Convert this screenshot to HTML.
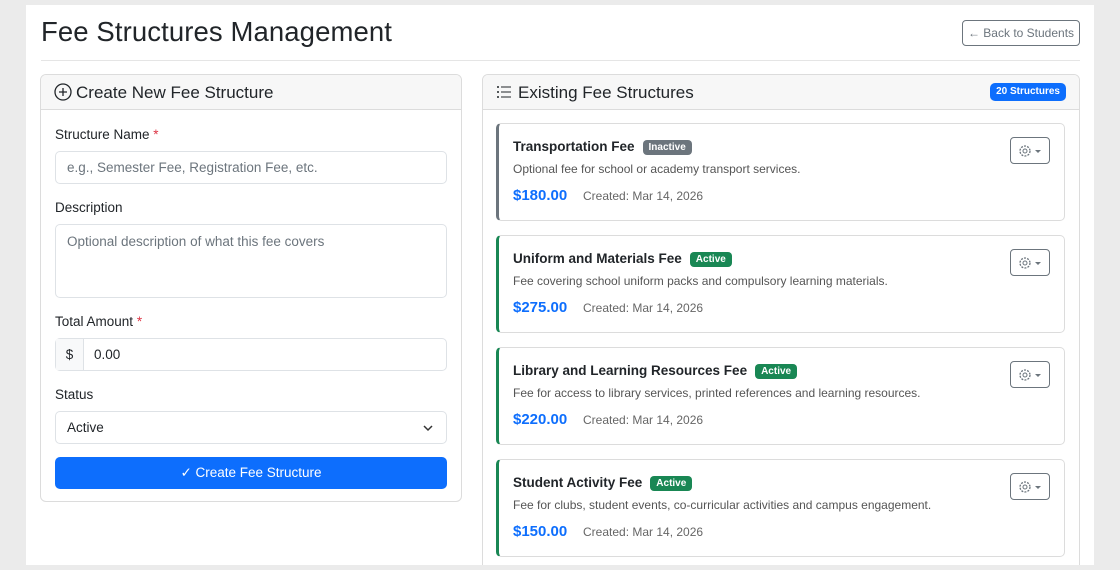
<!DOCTYPE html><html><head><meta charset="utf-8"><style>
*{box-sizing:border-box;margin:0;padding:0}
body{width:1120px;height:570px;background:#ebebeb;font-family:"Liberation Sans",sans-serif;color:#212529;position:relative;overflow:hidden}
.wrap{position:absolute;left:26px;top:5px;width:1068px;height:560px;background:#fff;overflow:hidden}
.abs{position:absolute}
h1{position:absolute;left:15px;top:11px;font-size:27.5px;font-weight:500;letter-spacing:0.1px}
.back{left:936px;top:15px;width:118px;height:26px;border:1px solid #6c757d;border-radius:4px;color:#6c757d;font-size:12px;line-height:24px;text-align:center}
.hr{left:15px;top:55px;width:1039px;height:1px;background:#e5e5e5}
.card{border:1px solid #dcdcdc;border-radius:6px;background:#fff;overflow:hidden}
.ch{height:35px;background:#f7f7f7;border-bottom:1px solid #dcdcdc;font-size:17px;font-weight:500;line-height:35px;padding-left:13px}
label{position:absolute;left:14px;font-size:13.5px;color:#212529}
label b{color:#dc3545;font-weight:400}
.in{position:absolute;left:14px;width:392px;border:1px solid #dee2e6;border-radius:5px;font-size:13.5px;color:#6c757d;padding-left:11px}
.btn{position:absolute;left:14px;top:382px;width:392px;height:32px;background:#0d6efd;border-radius:5px;color:#fff;font-size:13.5px;text-align:center;line-height:32px}
.item{position:absolute;left:13px;width:569px;height:98px;border:1px solid #dcdcdc;border-left:3px solid #198754;border-radius:5px}
.item .t{position:absolute;left:14px;top:15px;font-size:13.5px;font-weight:600}
.badge{display:inline-block;font-size:10px;font-weight:700;color:#fff;background:#198754;border-radius:4px;padding:2px 6px;margin-left:8px;vertical-align:1px}
.item .d{position:absolute;left:14px;top:38px;font-size:12px;color:#555}
.item .p{position:absolute;left:14px;top:63px;font-size:15px;font-weight:700;color:#0d6efd}
.item .c{position:absolute;left:84px;top:65px;font-size:12px;color:#666}
.gear{position:absolute;left:511px;top:13px;width:40px;height:27px;border:1px solid #6c757d;border-radius:4px}
</style></head><body><div class="wrap">
<h1>Fee Structures Management</h1>
<div class="abs back">← Back to Students</div>
<div class="abs hr"></div>
<div class="abs card" style="left:14px;top:69px;width:422px;height:428px">
<div class="ch"><svg width="18" height="18" viewBox="0 0 18 18" style="vertical-align:-3px;margin-right:4px"><circle cx="9" cy="9" r="8" fill="none" stroke="#212529" stroke-width="1.3"/><path d="M9 5v8M5 9h8" stroke="#212529" stroke-width="1.3"/></svg>Create New Fee Structure</div>
<label style="top:52px">Structure Name <b>*</b></label>
<div class="in" style="top:76px;height:33px;line-height:31px">e.g., Semester Fee, Registration Fee, etc.</div>
<label style="top:125px">Description</label>
<div class="in" style="top:149px;height:74px;padding-top:9px">Optional description of what this fee covers</div>
<label style="top:239px">Total Amount <b>*</b></label>
<div class="in" style="top:263px;height:33px;line-height:31px;color:#212529;padding-left:0"><span style="display:inline-block;width:28px;text-align:center;border-right:1px solid #dee2e6;background:#f8f9fa">$</span><span style="padding-left:10px">0.00</span></div>
<label style="top:312px">Status</label>
<div class="in" style="top:336px;height:33px;line-height:31px;color:#212529">Active<svg class="abs" style="right:12px;top:11px" width="12" height="10" viewBox="0 0 12 10"><path d="M2 3l4 4 4-4" fill="none" stroke="#333" stroke-width="1.5"/></svg></div>
<div class="btn">✓ Create Fee Structure</div>
</div>
<div class="abs card" style="left:456px;top:69px;width:598px;height:520px">
<div class="ch"><svg width="16" height="14" viewBox="0 0 16 14" style="vertical-align:-1px;margin-right:6px"><g fill="#212529"><circle cx="2" cy="2" r="1"/><circle cx="2" cy="7" r="1"/><circle cx="2" cy="12" r="1"/><rect x="5" y="1.5" width="10" height="1"/><rect x="5" y="6.5" width="10" height="1"/><rect x="5" y="11.5" width="10" height="1"/></g></svg>Existing Fee Structures<span class="abs" style="right:13px;top:8px;background:#0d6efd;color:#fff;font-size:10px;font-weight:700;border-radius:5px;padding:0 6px;line-height:18px">20 Structures</span></div>
<div class="item" style="top:48px;border-left-color:#6c757d"><div class="t">Transportation Fee<span class="badge" style="background:#6c757d">Inactive</span></div><div class="d">Optional fee for school or academy transport services.</div><div class="p">$180.00</div><div class="c">Created: Mar 14, 2026</div><div class="gear"><svg class="abs" style="left:7px;top:6px" width="24" height="14"><circle cx="7" cy="7" r="5" fill="none" stroke="#6c757d" stroke-width="1.3" stroke-dasharray="2 1.2"/><circle cx="7" cy="7" r="2" fill="none" stroke="#6c757d"/><path d="M17 6h6l-3 3z" fill="#6c757d"/></svg></div></div>
<div class="item" style="top:160px"><div class="t">Uniform and Materials Fee<span class="badge">Active</span></div><div class="d">Fee covering school uniform packs and compulsory learning materials.</div><div class="p">$275.00</div><div class="c">Created: Mar 14, 2026</div><div class="gear"><svg class="abs" style="left:7px;top:6px" width="24" height="14"><circle cx="7" cy="7" r="5" fill="none" stroke="#6c757d" stroke-width="1.3" stroke-dasharray="2 1.2"/><circle cx="7" cy="7" r="2" fill="none" stroke="#6c757d"/><path d="M17 6h6l-3 3z" fill="#6c757d"/></svg></div></div>
<div class="item" style="top:272px"><div class="t">Library and Learning Resources Fee<span class="badge">Active</span></div><div class="d">Fee for access to library services, printed references and learning resources.</div><div class="p">$220.00</div><div class="c">Created: Mar 14, 2026</div><div class="gear"><svg class="abs" style="left:7px;top:6px" width="24" height="14"><circle cx="7" cy="7" r="5" fill="none" stroke="#6c757d" stroke-width="1.3" stroke-dasharray="2 1.2"/><circle cx="7" cy="7" r="2" fill="none" stroke="#6c757d"/><path d="M17 6h6l-3 3z" fill="#6c757d"/></svg></div></div>
<div class="item" style="top:384px"><div class="t">Student Activity Fee<span class="badge">Active</span></div><div class="d">Fee for clubs, student events, co-curricular activities and campus engagement.</div><div class="p">$150.00</div><div class="c">Created: Mar 14, 2026</div><div class="gear"><svg class="abs" style="left:7px;top:6px" width="24" height="14"><circle cx="7" cy="7" r="5" fill="none" stroke="#6c757d" stroke-width="1.3" stroke-dasharray="2 1.2"/><circle cx="7" cy="7" r="2" fill="none" stroke="#6c757d"/><path d="M17 6h6l-3 3z" fill="#6c757d"/></svg></div></div>
</div>
</div></body></html>
